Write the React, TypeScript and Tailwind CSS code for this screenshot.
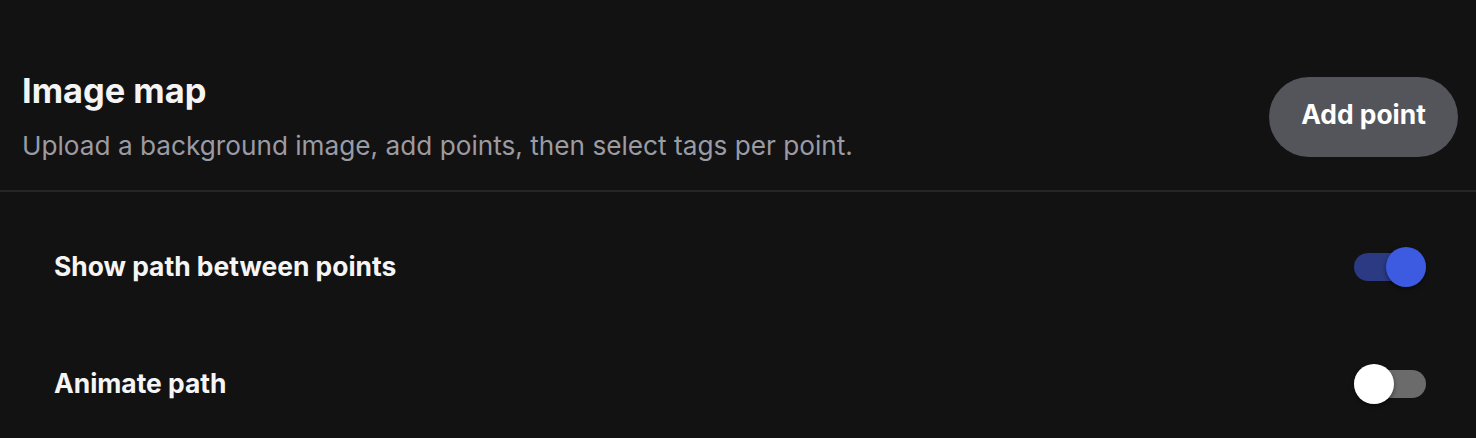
import * as React from "react";

function Toggle({ on }: { on: boolean }) {
  return (
    <div className="relative h-[40px] w-[72px] flex items-center">
      <div className={["h-[28px] w-[72px] rounded-full", on ? "bg-[#2b3a82]" : "bg-[#6b6b6b]"].join(" ")} />
      <div
        className={[
          "absolute top-0 h-[40px] w-[40px] rounded-full shadow-[0_2px_4px_rgba(0,0,0,0.45)]",
          on ? "right-0 bg-[#3d5be0]" : "left-0 bg-white",
        ].join(" ")}
      />
    </div>
  );
}

function SettingRow({ label, on }: { label: string; on: boolean }) {
  return (
    <div className="flex items-center justify-between px-8 h-[117px]">
      <span className="text-[26.4px] font-bold text-[#f5f5f5]">{label}</span>
      <Toggle on={on} />
    </div>
  );
}

export default function App() {
  const [rows] = React.useState([
    { label: "Show path between points", on: true },
    { label: "Animate path", on: false },
  ]);

  return (
    <div className="min-h-[438px] w-full bg-[#121212] font-['Inter',sans-serif] overflow-hidden">
      <div className="flex items-center justify-between pl-[22px] pr-[18px] pt-[71px] pb-[28px] border-b-2 border-[#262626]">
        <div>
          <h1 className="text-[34.4px] font-bold leading-[40px] text-[#f4f4f4]">Image map</h1>
          <p className="mt-[19px] text-[26.2px] leading-[32px] text-[#9b9ba3]">
            Upload a background image, add points, then select tags per point.
          </p>
        </div>
        <button
          type="button"
          className="h-[80px] w-[189px] rounded-full bg-[#54545b] pb-[3px] text-[26.4px] font-bold text-white"
        >
          Add point
        </button>
      </div>
      <div className="pl-[22px] pr-[18px] pt-[16px]">
        {rows.map((r) => (
          <SettingRow key={r.label} label={r.label} on={r.on} />
        ))}
      </div>
    </div>
  );
}
